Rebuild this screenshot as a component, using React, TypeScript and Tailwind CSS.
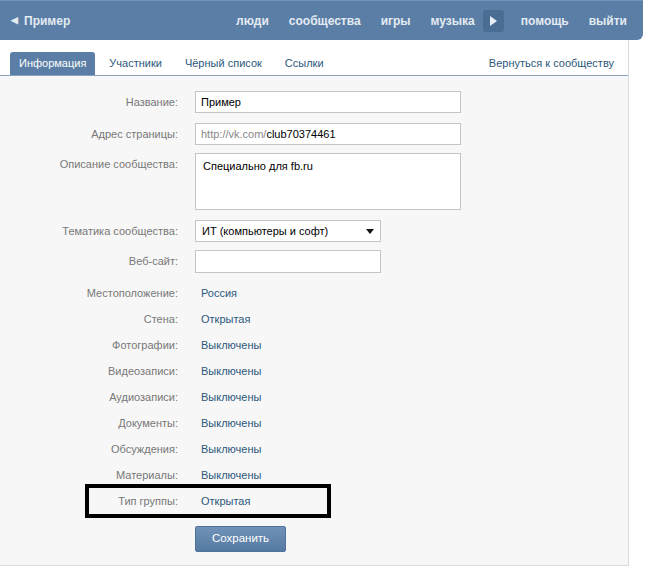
import React from "react";

const navItems = ["люди", "сообщества", "игры", "музыка"];

const tabs = ["Информация", "Участники", "Чёрный список", "Ссылки"];

const infoRows = [
  { label: "Местоположение:", value: "Россия" },
  { label: "Стена:", value: "Открытая" },
  { label: "Фотографии:", value: "Выключены" },
  { label: "Видеозаписи:", value: "Выключены" },
  { label: "Аудиозаписи:", value: "Выключены" },
  { label: "Документы:", value: "Выключены" },
  { label: "Обсуждения:", value: "Выключены" },
  { label: "Материалы:", value: "Выключены" },
];

const Label = ({ children, top = false }: { children: React.ReactNode; top?: boolean }) => (
  <div className={`w-[178px] shrink-0 text-right text-[#777] ${top ? "pt-[3px]" : ""}`}>{children}</div>
);

const App = () => {
  return (
    <div className="w-[650px] h-[568px] bg-white overflow-hidden text-[11px] font-['Liberation_Sans',Arial,sans-serif]">
      {/* Top bar */}
      <div className="w-[643px] h-[40px] bg-[#5a7ea6] border-t border-[#7593b5] rounded-br-[6px] flex items-center text-[12px] font-bold text-[#e4ebf3]">
        <div className="flex items-center pl-[11px]">
          <span className="text-[9px] mr-[6px]">◀</span>
          <span>Пример</span>
        </div>
        <div className="ml-auto flex items-center gap-[20px] pr-[16px]">
          {navItems.map((item) => (
            <span key={item}>{item}</span>
          ))}
          <div className="ml-[-12px] mr-[-3px] w-[21px] h-[22px] rounded-[3px] bg-[#4a6d94] flex items-center justify-center">
            <svg width="7" height="10" viewBox="0 0 7 10">
              <path d="M0 0 L7 5 L0 10 Z" fill="#e8eef5" />
            </svg>
          </div>
          <span>помощь</span>
          <span>выйти</span>
        </div>
      </div>

      {/* Content */}
      <div className="w-[629px] border-r border-b border-[#dcdcdc]">
        {/* Tabs */}
        <div className="flex items-end pt-[12px] pl-[10px] pr-[14px] border-b border-[#8ca3bd] bg-white">
          {tabs.map((tab, i) => (
            <div
              key={tab}
              className={`px-[9px] h-[23px] flex items-center mr-[5px] ${
                i === 0 ? "bg-[#5a7ea6] text-white rounded-t-[3px]" : "text-[#2b587a]"
              }`}
            >
              {tab}
            </div>
          ))}
          <div className="ml-auto h-[23px] flex items-center text-[#2b587a]">Вернуться к сообществу</div>
        </div>

        {/* Form */}
        <div className="bg-[#f7f7f7] h-[489px] pt-[15px] flex flex-col">
          <div className="flex items-center gap-[17px]">
            <Label>Название:</Label>
            <div className="w-[266px] h-[22px] bg-white border border-[#c5c5c5] px-[5px] flex items-center text-black">Пример</div>
          </div>

          <div className="flex items-center gap-[17px] mt-[10px]">
            <Label>Адрес страницы:</Label>
            <div className="w-[266px] h-[22px] bg-white border border-[#c5c5c5] px-[5px] flex items-center">
              <span className="text-[#888]">http://vk.com/</span>
              <span className="text-black">club70374461</span>
            </div>
          </div>

          <div className="flex items-start gap-[17px] mt-[8px]">
            <Label top>Описание сообщества:</Label>
            <div className="w-[266px] h-[57px] bg-white border border-[#c5c5c5] px-[7px] pt-[4px] text-black">Специально для fb.ru</div>
          </div>

          <div className="flex items-center gap-[17px] mt-[10px]">
            <Label>Тематика сообщества:</Label>
            <div className="w-[186px] h-[22px] bg-white border border-[#c5c5c5] pl-[6px] pr-[6px] flex items-center text-black">
              <span>ИТ (компьютеры и софт)</span>
              <svg className="ml-auto" width="8" height="5" viewBox="0 0 8 5">
                <path d="M0 0 L8 0 L4 5 Z" fill="#111" />
              </svg>
            </div>
          </div>

          <div className="flex items-center gap-[17px] mt-[8px]">
            <Label>Веб-сайт:</Label>
            <div className="w-[186px] h-[23px] bg-white border border-[#c5c5c5]" />
          </div>

          <div className="mt-[7px] flex flex-col">
            {infoRows.map((row) => (
              <div key={row.label} className="flex items-center gap-[23px] h-[26px]">
                <Label>{row.label}</Label>
                <span className="text-[#2b587a]">{row.value}</span>
              </div>
            ))}
            <div className="relative flex items-center gap-[23px] h-[26px]">
              <Label>Тип группы:</Label>
              <span className="text-[#2b587a]">Открытая</span>
              <div className="absolute left-[85px] top-[-4px] w-[246px] h-[34px] border-[4px] border-black" />
            </div>
          </div>

          <div className="pl-[195px] mt-[12px]">
            <button className="w-[91px] h-[26px] rounded-[2px] bg-gradient-to-b from-[#7092b8] to-[#557aa1] border border-[#4f7399] text-white text-[11.5px]">
              Сохранить
            </button>
          </div>
        </div>
      </div>
    </div>
  );
};

export default App;
